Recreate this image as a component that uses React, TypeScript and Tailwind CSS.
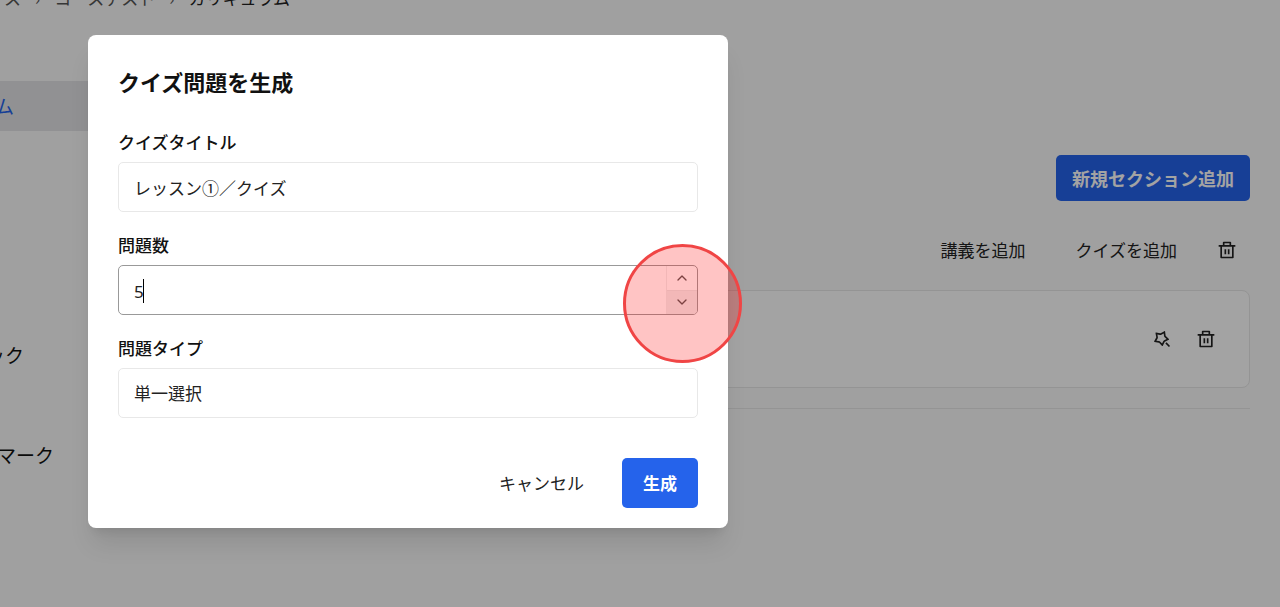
import { useState } from 'react';
import { RiDeleteBinLine, RiMagicLine } from 'react-icons/ri';
import { ChevronDown, ChevronUp } from 'lucide-react';

const fieldBox = 'h-[50px] w-full rounded-[5px] border bg-white px-[15px] text-[#222]';

function Sidebar() {
  return (
    <nav className="w-52 shrink-0 pt-[81px] text-[19px] text-[#111]">
      <a href="#curriculum" className="flex h-[50px] items-center overflow-hidden bg-[#e3e3e6] text-[#2563eb]">
        <span className="-ml-[5px]">ム</span>
      </a>
      <a href="#content" className="mt-[199px] flex h-[50px] items-center whitespace-nowrap">
        <span className="-ml-[14px]">ック</span>
      </a>
      <a href="#mark" className="mt-[50px] flex h-[50px] items-center whitespace-nowrap">
        <span className="-ml-[3px]">マーク</span>
      </a>
    </nav>
  );
}

function Breadcrumb() {
  return (
    <nav className="absolute left-1 -top-3.5 flex h-6 items-center gap-[14px] whitespace-nowrap text-[#555]">
      <a href="#course">ス</a>
      <span>›</span>
      <a href="#test">コーステスト</a>
      <span>›</span>
      <span className="text-[#222]">カリキュラム</span>
    </nav>
  );
}

function Curriculum() {
  return (
    <main className="flex min-w-0 flex-1 flex-col pt-[155px] pr-[30px] pl-8">
      <button className="h-[46px] self-end rounded-[5px] bg-[#2563eb] px-4 text-[18px] font-bold text-white">
        新規セクション追加
      </button>
      <div className="mt-[37px] flex h-6 items-center justify-end text-[#222]">
        <button className="mr-[50px]">講義を追加</button>
        <button className="mr-10">クイズを追加</button>
        <button aria-label="セクションを削除" className="mr-[13px]">
          <RiDeleteBinLine className="size-5" />
        </button>
      </div>
      <div className="mt-7 flex h-[98px] items-center justify-end gap-6 rounded-lg border border-[#e8e8e8] bg-white pr-[33px] text-[#222]">
        <button aria-label="クイズを生成">
          <RiMagicLine className="size-5" />
        </button>
        <button aria-label="レッスンを削除">
          <RiDeleteBinLine className="size-5" />
        </button>
      </div>
      <hr className="mt-5 border-[#e8e8e8]" />
    </main>
  );
}

function QuizDialog() {
  const [title, setTitle] = useState('レッスン①／クイズ');
  const [count, setCount] = useState('5');

  return (
    <form
      role="dialog"
      aria-labelledby="dialog-title"
      onSubmit={(e) => e.preventDefault()}
      className="w-[640px] rounded-lg bg-white px-[30px] pt-[30px] pb-5 shadow-xl"
    >
      <h2 id="dialog-title" className="text-[22px] leading-8 font-bold text-[#111]">
        クイズ問題を生成
      </h2>

      <div className="mt-[33px] flex flex-col gap-[21px]">
        <div className="flex flex-col gap-2">
          <label htmlFor="title" className="font-medium text-[#111]">クイズタイトル</label>
          <input
            id="title"
            value={title}
            onChange={(e) => setTitle(e.target.value)}
            className={`${fieldBox} border-[#e8e8e8]`}
          />
        </div>

        <div className="flex flex-col gap-2">
          <label htmlFor="count" className="font-medium text-[#111]">問題数</label>
          <div className="relative flex h-[50px] overflow-hidden rounded-[5px] border border-[#999]">
            <input
              id="count"
              inputMode="numeric"
              value={count}
              onChange={(e) => setCount(e.target.value)}
              className="min-w-0 flex-1 px-[15px] pt-[3px] font-['Noto_Sans'] text-[#222] outline-none"
            />
            {/* caret */}
            <span className="absolute top-[13px] left-[24px] h-6 w-px bg-black" />
            <div className="flex w-[31px] flex-col border-l border-[#eee] text-[#555]">
              <button
                type="button"
                aria-label="増やす"
                onClick={() => setCount(String(Number(count) + 1))}
                className="grid flex-1 place-items-center"
              >
                <ChevronUp className="size-4" />
              </button>
              <button
                type="button"
                aria-label="減らす"
                onClick={() => setCount(String(Number(count) - 1))}
                className="grid flex-1 place-items-center border-t border-[#e8e8e8] bg-[#f0f0f0]"
              >
                <ChevronDown className="size-4" />
              </button>
            </div>
          </div>
        </div>

        <div className="flex flex-col gap-2">
          <label htmlFor="type" className="font-medium text-[#111]">問題タイプ</label>
          <select id="type" className={`${fieldBox} appearance-none border-[#e8e8e8]`}>
            <option>単一選択</option>
          </select>
        </div>
      </div>

      <div className="mt-10 flex justify-end gap-[18px]">
        <button type="button" className="h-[50px] px-5 text-[#222]">キャンセル</button>
        <button type="submit" className="h-[50px] rounded-[5px] bg-[#2563eb] px-[21px] font-bold text-white">
          生成
        </button>
      </div>
    </form>
  );
}

export default function App() {
  return (
    <div className="relative flex min-h-screen overflow-hidden bg-[#fafafa] font-['Noto_Sans_CJK_JP',sans-serif] text-[17px] leading-6">
      <Breadcrumb />
      <Sidebar />
      <Curriculum />
      <div className="absolute inset-0 bg-black/36 pt-[35px] pl-[88px]">
        <QuizDialog />
      </div>
      {/* click highlight */}
      <div className="pointer-events-none absolute top-[244px] left-[623px] size-[119px] rounded-full border-3 border-[#f04545] bg-[#ff0000]/23" />
    </div>
  );
}
